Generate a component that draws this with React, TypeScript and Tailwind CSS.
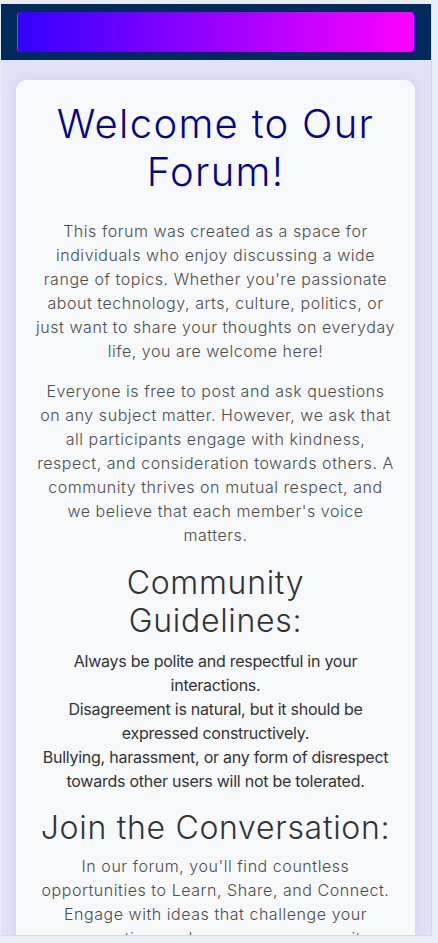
const guidelines = [
  'Always be polite and respectful in your interactions.',
  'Disagreement is natural, but it should be expressed constructively.',
  'Bullying, harassment, or any form of disrespect towards other users will not be tolerated.',
];

export default function App() {
  return (
    <div className="h-screen overflow-hidden bg-[#e8ecf3] pl-px pt-1">
      <div className="flex h-[932px] w-[431px] flex-col overflow-hidden border-r border-b border-[#d5d9e3] bg-[#e1e1f8]">
        <header className="shrink-0 bg-[#002a5b] px-4 py-2">
          <div className="h-10 rounded-[4px] border-x border-l-[#ff00ff] border-r-[#3300ff] bg-[linear-gradient(to_right,#3300ff,#ff00ff)]" />
        </header>

        <main className="mt-5 ml-[15px] mr-4 shrink-0 rounded-[10px] bg-[#f7f8fa] px-5 pt-5 pb-8 text-center shadow-[0_0_12px_rgba(120,120,200,0.18)] font-['Inter',sans-serif] font-light">
          <h1 className="text-[40px] leading-[1.2] tracking-[1.3px] text-[#05058c]">Welcome to Our Forum!</h1>

          <p className="mt-[23px] text-base leading-6 tracking-[0.55px] text-[#4d4d4d]">
            This forum was created as a space for individuals who enjoy discussing a wide range of topics. Whether
            you're passionate about technology, arts, culture, politics, or just want to share your thoughts on
            everyday life, you are welcome here!
          </p>

          <p className="mt-4 text-base leading-6 tracking-[0.55px] text-[#4d4d4d]">
            Everyone is free to post and ask questions on any subject matter. However, we ask that all participants
            engage with kindness, respect, and consideration towards others. A community thrives on mutual respect,
            and we believe that each member's voice matters.
          </p>

          <h2 className="mt-[17px] text-[32px] leading-[1.2] tracking-[0.7px] text-[#333]">Community Guidelines:</h2>

          <ul className="mt-2 text-base font-normal leading-6 tracking-[-0.25px] text-[#333]">
            {guidelines.map((g) => (
              <li key={g}>{g}</li>
            ))}
          </ul>

          <h2 className="mt-[16px] text-[32px] leading-[1.2] tracking-[0.7px] text-[#333]">Join the Conversation:</h2>

          <p className="mt-[7px] text-base leading-6 tracking-[0.55px] text-[#4d4d4d]">
            In our forum, you'll find countless opportunities to Learn, Share, and Connect. Engage with ideas that
            challenge your perspective, and grow your community through meaningful conversations.
          </p>
        </main>
      </div>
    </div>
  );
}
